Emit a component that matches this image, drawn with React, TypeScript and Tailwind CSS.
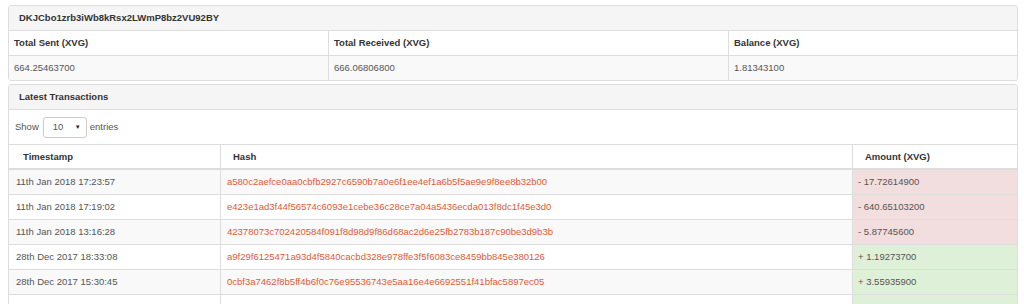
import React from "react";

const summary = [
  { label: "Total Sent (XVG)", value: "664.25463700", w: "w-[319px]" },
  { label: "Total Received (XVG)", value: "666.06806800", w: "w-[400px]" },
  { label: "Balance (XVG)", value: "1.81343100", w: "" },
];

const txs = [
  { ts: "11th Jan 2018 17:23:57", hash: "a580c2aefce0aa0cbfb2927c6590b7a0e6f1ee4ef1a6b5f5ae9e9f8ee8b32b00", amount: "- 17.72614900", out: true },
  { ts: "11th Jan 2018 17:19:02", hash: "e423e1ad3f44f56574c6093e1cebe36c28ce7a04a5436ecda013f8dc1f45e3d0", amount: "- 640.65103200", out: true },
  { ts: "11th Jan 2018 13:16:28", hash: "42378073c702420584f091f8d98d9f86d68ac2d6e25fb2783b187c90be3d9b3b", amount: "- 5.87745600", out: true },
  { ts: "28th Dec 2017 18:33:08", hash: "a9f29f6125471a93d4f5840cacbd328e978ffe3f5f6083ce8459bb845e380126", amount: "+ 1.19273700", out: false },
  { ts: "28th Dec 2017 15:30:45", hash: "0cbf3a7462f8b5ff4b6f0c76e95536743e5aa16e4e6692551f41bfac5897ec05", amount: "+ 3.55935900", out: false },
  // next row only peeks in at the bottom edge
  { ts: "", hash: "", amount: "", out: false },
];

export default function App() {
  return (
    <div className="min-h-screen bg-white text-[9.5px] text-[#555] font-['Liberation_Sans',Arial,sans-serif] pt-[5px]">
      {/* address summary */}
      <div className="ml-[8px] mr-[6px] border border-[#ddd] rounded-[3px] overflow-hidden">
        <div className="h-[25px] bg-[#f5f5f5] border-b border-[#ddd] px-[10px] flex items-center font-bold text-[#333]">
          DKJCbo1zrb3iWb8kRsx2LWmP8bz2VU92BY
        </div>
        <table className="w-full table-fixed border-separate border-spacing-0">
          <thead>
            <tr>
              {summary.map((s, i) => (
                <th
                  key={s.label}
                  className={`${s.w} text-left font-bold text-[#333] px-[5px] py-[5px] leading-[14px] border-b border-[#ddd] bg-white ${i > 0 ? "border-l" : ""}`}
                >
                  {s.label}
                </th>
              ))}
            </tr>
          </thead>
          <tbody>
            <tr>
              {summary.map((s, i) => (
                <td
                  key={s.label}
                  className={`text-left px-[5px] py-[5px] leading-[14px] bg-[#f9f9f9] border-[#ddd] ${i > 0 ? "border-l" : ""}`}
                >
                  {s.value}
                </td>
              ))}
            </tr>
          </tbody>
        </table>
      </div>

      {/* latest transactions */}
      <div className="ml-[8px] mr-[6px] mt-[3px] border border-[#ddd] rounded-t-[3px] overflow-hidden">
        <div className="h-[25px] bg-[#f5f5f5] border-b border-[#ddd] px-[10px] flex items-center font-bold text-[#333]">
          Latest Transactions
        </div>
        <div className="pl-[6px] flex items-center h-[34px]">
          <span>Show</span>
          <div className="ml-[4px] mr-[3px] w-[44px] h-[21px] border border-[#ccc] rounded-[3px] flex items-center justify-between pl-[9px] pr-[5px] text-[#555] bg-white">
            <span>10</span>
            <span className="text-[6px] text-[#222]">▼</span>
          </div>
          <span>entries</span>
        </div>
        <table className="w-full table-fixed border-separate border-spacing-0">
          <thead>
            <tr>
              <th className="w-[211px] text-left font-bold text-[#333] pl-[14px] py-[4px] leading-[15px] border-t border-b-2 border-[#ddd]">
                Timestamp
              </th>
              <th className="w-[632px] text-left font-bold text-[#333] pl-[12px] py-[4px] leading-[15px] border-t border-b-2 border-l border-[#ddd]">
                Hash
              </th>
              <th className="text-left font-bold text-[#333] pl-[12px] py-[4px] leading-[15px] border-t border-b-2 border-l border-[#ddd]">
                Amount (XVG)
              </th>
            </tr>
          </thead>
          <tbody>
            {txs.map((t, i) => {
              const stripe = i % 2 === 0 ? "bg-[#f9f9f9]" : "bg-white";
              return (
                <tr key={i}>
                  <td className={`${stripe} h-[25px] pl-[7px] py-[5px] leading-[14px] border-b border-[#ddd] whitespace-nowrap`}>
                    {t.ts}
                  </td>
                  <td className={`${stripe} pl-[6px] py-[5px] leading-[14px] border-b border-l border-[#ddd] whitespace-nowrap overflow-hidden`}>
                    <a href="#" className="text-[#e05a36]">
                      {t.hash}
                    </a>
                  </td>
                  <td
                    className={`${t.out ? "bg-[#f2dede]" : "bg-[#dff0d8]"} pl-[5px] py-[5px] leading-[14px] border-b border-l border-[#ddd] whitespace-nowrap`}
                  >
                    {t.amount}
                  </td>
                </tr>
              );
            })}
          </tbody>
        </table>
      </div>
    </div>
  );
}
